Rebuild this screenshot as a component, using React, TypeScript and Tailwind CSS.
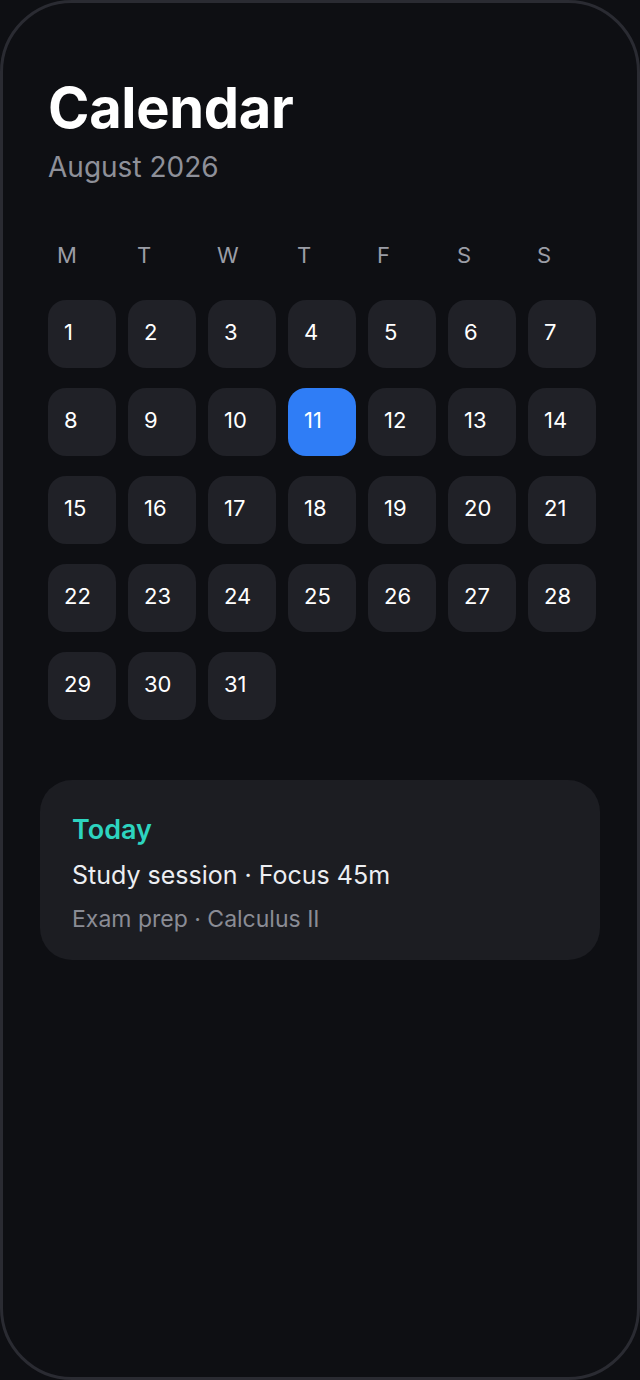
// Calendar month view
const weekdays = ['M', 'T', 'W', 'T', 'F', 'S', 'S']
const days = Array.from({ length: 31 }, (_, i) => i + 1)
const today = 11

export default function App() {
  return (
    <div className="w-[640px] h-[1380px] bg-[#0e0f13] font-['Inter',sans-serif]">
      <div className="h-full rounded-[72px] border-[3px] border-[#2a2b32] bg-[#0e0f13] pt-[77px]">
        {/* --- HEADER --- */}
        <div className="px-[45px]">
          <h1 className="text-[56px] leading-none font-bold tracking-[-0.3px] text-white">Calendar</h1>
          <p className="mt-[17px] text-[28px] leading-none text-[#8e9099]">August 2026</p>
        </div>

        {/* --- WEEKDAYS --- */}
        <div className="mt-[63px] ml-[45px] grid w-[548px] grid-cols-7 gap-x-3">
          {weekdays.map((d, i) => (
            <span key={i} className="pl-[9px] text-[22px] leading-none text-[#9b9da6]">{d}</span>
          ))}
        </div>

        {/* --- DAYS GRID --- */}
        <div className="mt-[34px] ml-[45px] grid w-[548px] grid-cols-7 gap-x-3 gap-y-5">
          {days.map((d) => (
            <div
              key={d}
              className={
                d === today
                  ? 'flex h-[68px] items-center rounded-[18px] bg-[#2f7df6] pl-4 pb-1 text-[22px] text-white'
                  : 'flex h-[68px] items-center rounded-[18px] bg-[#202127] pl-4 pb-1 text-[22px] text-white'
              }
            >
              {d}
            </div>
          ))}
        </div>

        {/* --- TODAY CARD --- */}
        <div className="mx-[37px] mt-[60px] rounded-[32px] bg-[#1c1d22] px-8 pt-[36px] pb-[29px]">
          <p className="text-[27px] leading-none font-semibold text-[#2dd4bf]">Today</p>
          <p className="mt-5 text-[25px] leading-none text-[#eceef2]">Study session · Focus 45m</p>
          <p className="mt-5 text-[23px] leading-none text-[#8a8c95]">Exam prep · Calculus II</p>
        </div>
      </div>
    </div>
  )
}
